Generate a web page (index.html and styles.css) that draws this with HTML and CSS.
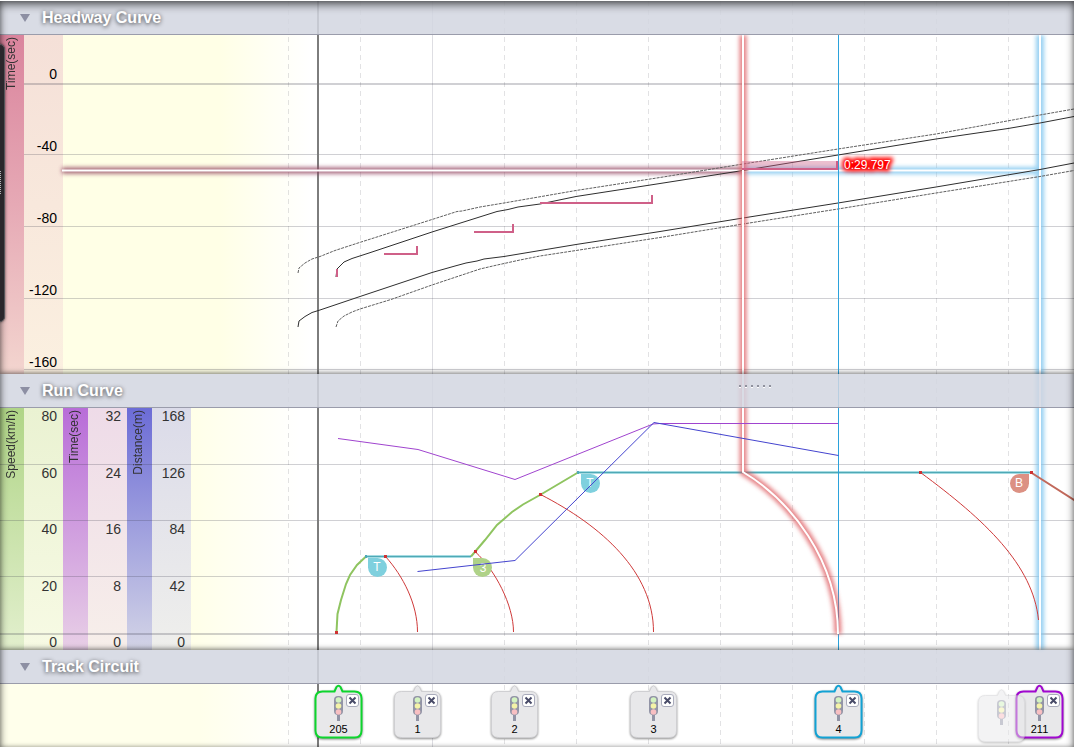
FILE: index.html
```html
<!DOCTYPE html>
<html lang="en">
<head>
  <meta charset="UTF-8" />
  <meta name="viewport" content="width=device-width, initial-scale=1.0"/>
  <title>Headway Curve</title>
  <link rel="stylesheet" href="styles.css">
</head>
<body>
  <main class="board">
    <div class="panels">
      <section class="panel">
        <h2 class="panel-header">
          <button type="button" class="toggle"><span class="arrow"></span>Headway Curve</button>
        </h2>
        <div class="plot headway-plot">
          <div class="axis headway-axis">
            <div class="axis-name"><span>Time(sec)</span></div>
            <ul class="ticks">
              <li>0</li>
              <li>-40</li>
              <li>-80</li>
              <li>-120</li>
              <li>-160</li>
            </ul>
          </div>
        </div>
      </section>

      <section class="panel">
        <h2 class="panel-header">
          <button type="button" class="toggle"><span class="arrow"></span>Run Curve</button>
          <span class="grip"><i></i><i></i><i></i><i></i><i></i><i></i></span>
        </h2>
        <div class="plot run-plot">
          <div class="axis speed-axis">
            <div class="axis-name"><span>Speed(km/h)</span></div>
            <ul class="ticks"><li>80</li><li>60</li><li>40</li><li>20</li><li>0</li></ul>
          </div>
          <div class="axis time-axis">
            <div class="axis-name"><span>Time(sec)</span></div>
            <ul class="ticks"><li>32</li><li>24</li><li>16</li><li>8</li><li>0</li></ul>
          </div>
          <div class="axis distance-axis">
            <div class="axis-name"><span>Distance(m)</span></div>
            <ul class="ticks"><li>168</li><li>126</li><li>84</li><li>42</li><li>0</li></ul>
          </div>
        </div>
      </section>

      <section class="panel">
        <h2 class="panel-header">
          <button type="button" class="toggle"><span class="arrow"></span>Track Circuit</button>
        </h2>
        <div class="plot track-plot">
          <div class="chip start" style="left: 339px">
            <svg class="bubble"><use href="#bubble"/></svg>
            <svg class="signal"><use href="#signal"/></svg>
            <button type="button" class="remove" aria-label="Remove 205"><svg><use href="#cross"/></svg></button>
            <span class="chip-label">205</span>
          </div>
          <div class="chip" style="left: 418px">
            <svg class="bubble"><use href="#bubble"/></svg>
            <svg class="signal"><use href="#signal"/></svg>
            <button type="button" class="remove" aria-label="Remove 1"><svg><use href="#cross"/></svg></button>
            <span class="chip-label">1</span>
          </div>
          <div class="chip" style="left: 515px">
            <svg class="bubble"><use href="#bubble"/></svg>
            <svg class="signal"><use href="#signal"/></svg>
            <button type="button" class="remove" aria-label="Remove 2"><svg><use href="#cross"/></svg></button>
            <span class="chip-label">2</span>
          </div>
          <div class="chip" style="left: 654px">
            <svg class="bubble"><use href="#bubble"/></svg>
            <svg class="signal"><use href="#signal"/></svg>
            <button type="button" class="remove" aria-label="Remove 3"><svg><use href="#cross"/></svg></button>
            <span class="chip-label">3</span>
          </div>
          <div class="chip current" style="left: 839px">
            <svg class="bubble"><use href="#bubble"/></svg>
            <svg class="signal"><use href="#signal"/></svg>
            <button type="button" class="remove" aria-label="Remove 4"><svg><use href="#cross"/></svg></button>
            <span class="chip-label">4</span>
          </div>
          <div class="chip end" style="left: 1040px">
            <svg class="bubble"><use href="#bubble"/></svg>
            <svg class="signal"><use href="#signal"/></svg>
            <button type="button" class="remove" aria-label="Remove 211"><svg><use href="#cross"/></svg></button>
            <span class="chip-label">211</span>
          </div>
          <div class="chip ghost" style="left: 1002px">
            <svg class="bubble"><use href="#bubble"/></svg>
            <svg class="signal"><use href="#signal"/></svg>
          </div>
        </div>
      </section>
    </div>

    <svg class="diagram">
      <defs>
        <filter id="glow" filterUnits="userSpaceOnUse" x="0" y="0" width="1200" height="760">
          <feGaussianBlur stdDeviation="2"/>
        </filter>
        <filter id="label-glow" x="-20%" y="-50%" width="140%" height="200%">
          <feGaussianBlur stdDeviation="2"/>
        </filter>
        <path id="bubble" d="M8.500 7.500H20.500L22.500 3Q24.500 0.500 26.500 3L28.500 7.500H40.500Q47.500 7.500 47.500 14.500V46.500Q47.500 53.500 40.500 53.500H8.500Q1.500 53.500 1.500 46.500V14.500Q1.500 7.500 8.500 7.500Z"/>
        <g id="signal">
          <rect x="3" y="17" width="3" height="8" fill="#9294a6"/>
          <rect x="0" y="0" width="9" height="19" rx="4" fill="#9294a6"/>
          <circle cx="4.500" cy="4" r="2.800" fill="#d3f3c0"/>
          <circle cx="4.500" cy="10" r="2.800" fill="#f4f3a8"/>
          <circle cx="4.500" cy="16" r="2.800" fill="#f8bfc2"/>
        </g>
        <path id="cross" d="M2.500 2.500L8.500 8.500M8.500 2.500L2.500 8.500"/>
      </defs>

      <g class="scene" transform="translate(0 -1)">
        <!-- grid -->
        <path class="grid-dash" d="M288.500 1V747M360.500 1V747M504.500 1V747M576.500 1V747M648.500 1V747M720.500 1V747M792.500 1V747M864.500 1V747M936.500 1V747M1008.500 1V747"/>
        <path class="grid-main" d="M432.500 1V747"/>
        <path class="grid-line" d="M24 154.500H4000M24 226.500H4000M24 298.500H4000M24 369.500H4000M0 464.500H4000M0 520.500H4000M0 576.500H4000"/>
        <path class="grid-zero" d="M24 84H4000M0 634H4000"/>
        <path class="origin" d="M318 1V747"/>

        <!-- headway guide -->
        <path class="glow-mauve" d="M62 170.500H743" filter="url(#glow)"/>
        <path class="glow-sky" d="M745 170.500H1038" filter="url(#glow)"/>
        <path class="core" d="M62 170.500H1038"/>

        <!-- cursor of the following train -->
        <path class="glow-sky wide" d="M1040 35V650" filter="url(#glow)"/>
        <path class="core" d="M1040 35V650"/>

        <!-- headway curves -->
        <path class="bound" d="M298 273L299 268L305 263L312 259L320 256.500L335 250.500L358 243L432 219.500L457 211.500L462 211L480 207L504 203L576 190.500L660 177.500L743 164L838 149L936 134L1040 115L1074 109L1400 55"/>
        <path class="train" d="M336 277L337 269L344 262L352 258.500L369 253L432 232L497 211.500L508 209.500L518 207L540 204L576 196.500L660 183.500L743 170.500L838 155L936 139L1008 128.500L1040 123L1074 116.500L1400 63"/>
        <path class="train" d="M298 327L299 321L305 316.500L312 312.500L320 310L360 296.500L432 272.500L455 266L466 263L477 261L484 259L504 256.500L576 244.500L660 231.500L743 218L838 203L936 187L1040 169.500L1074 163L1400 109"/>
        <path class="bound" d="M336 327L338 321L344 316L352 312L360 309L391 299.500L432 285L480 269L495 265.500L520 260L540 256L576 250.500L660 237.500L743 224L838 209L936 193L1040 176.500L1074 170.500L1400 117"/>
        <path class="step" d="M337 269V277M384 254H417V246M474 232H513V224M540 203H652V195"/>

        <!-- run curves -->
        <path class="hold-edge" d="M366 556.500H471M578 472.500H1031"/>
        <path class="hold" d="M366 556.500H471M578 472.500H1031"/>
        <path class="power" d="M336.500 632L337.500 614L341 600L346 584L350 575L357 565L366 556.500M471 556.500L485 540L497 525L504 519L512 512L523 504.500L540 495L578 472.500"/>
        <path class="brake" d="M1031 472.500L1074 500L1400 705"/>
        <path class="stop" d="M385.500 556.500C403 576 417.500 604 417.500 632"/>
        <path class="stop" d="M475.500 552C495 570 513.500 605 513.500 632"/>
        <path class="stop" d="M540.500 494.500C602 526 653.500 572 653.500 632"/>
        <path class="stop" d="M920.500 472.500C985 520 1033 565 1038.500 620"/>

        <path class="cursor" d="M838.500 35V650"/>
        <path class="glow-red" d="M743 35V472C790 500 838 560 838 634" filter="url(#glow)"/>
        <path class="core" d="M743 35V472C790 500 838 560 838 634"/>
        <path class="step-fill" d="M742 161H838V168H742Z"/>
        <path class="step" d="M742 169H837V161"/>

        <path class="badge-hold" d="M368 558H377.500A9.500 9.500 0 1 1 368 567.500Z"/>
        <path class="badge-hold" d="M581 474H590.500A9.500 9.500 0 1 1 581 483.500Z"/>
        <path class="badge-power" d="M473 558H482.500A9.500 9.500 0 1 1 473 567.500Z"/>
        <path class="badge-brake" d="M1029 474H1019.500A9.500 9.500 0 1 0 1029 483.500Z"/>
        <text class="badge" x="377" y="571">T</text>
        <text class="badge" x="590" y="487">T</text>
        <text class="badge" x="483" y="572">3</text>
        <text class="badge" x="1019" y="487">B</text>

        <path class="time" d="M338 438.500L418 449.500L515 479.500L653 424L660 423.500H838"/>
        <path class="distance" d="M417.500 571.500L515 560.500L654 422.500L838.500 455.500"/>
        <path class="dots" d="M335 632.500H338M384 556.500H387M474 551.500H477M539 494.500H542M919 472.500H922M1030 472.500H1033"/>
        <path class="dots hold-dots" d="M365 556.500H367M577 472.500H579"/>

        <text class="reading reading-glow" x="844" y="169" filter="url(#label-glow)">0:29.797</text>
        <text class="reading" x="844" y="169">0:29.797</text>
      </g>
    </svg>

    <div class="drawer"></div>
  </main>
</body>
</html>
```

FILE: styles.css
```css
* {
  box-sizing: border-box;
}

body {
  margin: 0;
  padding: 1px 0;
  min-height: 100vh;
  display: flex;
  background-color: #ffffff;
  font-family: "Liberation Sans", Arial, sans-serif;
  color: #333333;
}

.board {
  position: relative;
  flex: 1;
  display: grid;
  overflow: hidden;
}

.board::after {
  content: "";
  position: absolute;
  inset: 0;
  z-index: 3;
  box-shadow: inset 0 4px 9px rgba(0, 0, 0, 0.55), inset 0 0 4px rgba(0, 0, 0, 0.3);
  pointer-events: none;
}

.panels,
.diagram {
  grid-area: 1 / 1;
  min-width: 0;
}

.panels {
  display: flex;
  flex-direction: column;
}

.panel:last-child {
  flex: 1;
  display: flex;
  flex-direction: column;
}

.diagram {
  position: relative;
  z-index: 1;
  width: 100%;
  height: 100%;
  pointer-events: none;
}

/* headers */

.panel-header {
  position: relative;
  z-index: 2;
  display: flex;
  align-items: center;
  height: 34px;
  margin: 0;
  padding: 1px 0 0 20px;
  background-color: rgba(210, 214, 224, 0.85);
  border-bottom: 1px solid #9a9cab;
  box-shadow: 0 -1px 5px rgba(0, 0, 0, 0.55);
  clip-path: inset(-8px 0 0 0);
}

.toggle {
  display: flex;
  align-items: center;
  gap: 12px;
  padding: 0;
  border: none;
  background: none;
  color: #ffffff;
  font: bold 16px/20px "Liberation Sans", Arial, sans-serif;
  text-shadow: 0 1px 4px rgba(0, 0, 0, 0.75);
  cursor: pointer;
}

.arrow {
  border: 5px solid transparent;
  border-top: 8px solid #8d8fa3;
  border-bottom: none;
}

.grip {
  position: absolute;
  left: 739px;
  top: 11px;
  display: flex;
  gap: 4px;
}

.grip i {
  width: 2px;
  height: 3px;
  background-color: #8f919d;
  border-bottom: 1px solid #ffffff;
}

/* plots and axes */

.plot {
  position: relative;
  display: flex;
}

.headway-plot {
  height: 339px;
  background: linear-gradient(to right, #ffffe6 220px, #ffffff 310px);
}

.run-plot {
  height: 242px;
  background: linear-gradient(to right, #ffffe8 190px, #ffffff 300px);
}

.track-plot {
  flex: 1;
  min-height: 63px;
  background: linear-gradient(to right, #ffffeb 200px, #ffffff 300px);
}

.axis {
  display: flex;
}

.axis-name {
  width: 25px;
  padding: 2px 0 0 4px;
  font-size: 12px;
  line-height: 14px;
}

.headway-axis .axis-name,
.speed-axis .axis-name {
  width: 24px;
}

.axis-name span {
  display: block;
  writing-mode: vertical-rl;
  transform: rotate(180deg);
}

.ticks {
  display: flex;
  flex-direction: column;
  justify-content: space-between;
  width: 39px;
  margin: 0;
  padding: 0 6px 0 0;
  list-style: none;
  font-size: 14px;
  line-height: 16px;
  text-align: right;
}

.headway-axis .ticks {
  justify-content: flex-end;
  gap: 56px;
  padding-bottom: 4px;
  background: linear-gradient(#f5e0d8, #fbf0e0);
  color: #000000;
}

.headway-axis .axis-name {
  background: linear-gradient(#da849d, #e6a9b5 50%, #f3d5cf);
}

.speed-axis .axis-name {
  background: linear-gradient(#b0d587, #e2efcd);
}

.speed-axis .ticks {
  background: linear-gradient(#eaf2d2, #f7fae4);
}

.time-axis .axis-name {
  background: linear-gradient(#b86dd8, #e8cfe6);
}

.time-axis .ticks {
  background: linear-gradient(#eedbe8, #f7efea);
}

.distance-axis .axis-name {
  background: linear-gradient(#6c6cd6, #d3d4e6);
}

.distance-axis .ticks {
  background: linear-gradient(#dbdbe9, #efefec);
}

/* diagram */

.scene path {
  fill: none;
}

.grid-line,
.grid-zero {
  stroke: rgba(60, 60, 75, 0.24);
}

.grid-dash {
  stroke: rgba(60, 60, 75, 0.15);
  stroke-dasharray: 5 4;
}

.grid-main {
  stroke: rgba(60, 60, 90, 0.17);
}

.grid-zero {
  stroke-width: 2;
}

.origin {
  stroke: #7d7d7d;
  stroke-width: 2;
}

.core {
  stroke: #ffffff;
  stroke-width: 2;
}

.glow-mauve {
  stroke: #91405f;
  stroke-width: 6;
  opacity: 0.85;
}

.glow-sky {
  stroke: #7cc4ee;
  stroke-width: 7;
  opacity: 0.8;
}

.glow-red {
  stroke: #dc5258;
  stroke-width: 7;
  opacity: 0.75;
}

.glow-sky.wide {
  stroke-width: 8;
}

.bound {
  stroke: #606060;
  stroke-dasharray: 3 1;
}

.train {
  stroke: #2e2e2e;
}

.step {
  stroke: #cf6088;
  stroke-width: 2;
}

.scene .step-fill {
  fill: rgba(207, 96, 136, 0.4);
}

.hold-edge {
  stroke: #a5dbe2;
  stroke-width: 3;
}

.hold {
  stroke: #4fa9b6;
}

.power {
  stroke: #8fc460;
  stroke-width: 2;
}

.brake {
  stroke: #c2695b;
  stroke-width: 2;
}

.stop {
  stroke: #cf3a3a;
}

.cursor {
  stroke: #2ba2dc;
}

.time {
  stroke: #a044cf;
}

.distance {
  stroke: #4444cf;
}

.dots {
  stroke: #cf3232;
  stroke-width: 3;
}

.hold-dots {
  stroke: #4fa9b6;
}

.badge {
  font-size: 12px;
  text-anchor: middle;
  fill: #ffffff;
}

.scene .badge-hold {
  fill: #7fd0de;
}

.scene .badge-power {
  fill: #afd288;
}

.scene .badge-brake {
  fill: #dc9183;
}

.reading {
  font-size: 12px;
  fill: #ffffff;
}

.reading-glow {
  fill: #ff0000;
  stroke: #ff0000;
  stroke-width: 5;
}

/* track circuit chips */

.chip {
  position: absolute;
  top: 0;
  z-index: 2;
  width: 49px;
  height: 58px;
  margin-left: -25px;
}

.chip svg {
  display: block;
  overflow: visible;
}

.bubble {
  position: absolute;
  inset: 0;
  width: 49px;
  height: 58px;
  fill: #e8e8ea;
  stroke: #cfcfd2;
  stroke-width: 1;
  filter: drop-shadow(0 1px 1px rgba(0, 0, 0, 0.45));
}

.start .bubble {
  stroke: #0dd52d;
  stroke-width: 2;
}

.current .bubble {
  stroke: #12a2d4;
  stroke-width: 2;
}

.end .bubble {
  stroke: #a007cf;
  stroke-width: 2;
}

.signal {
  position: absolute;
  left: 20px;
  top: 12px;
  width: 9px;
  height: 25px;
}

.remove {
  position: absolute;
  left: 32px;
  top: 10px;
  width: 13px;
  height: 13px;
  padding: 0;
  background-color: #ffffff;
  border: 1px solid #a9abbb;
  border-radius: 3px;
  cursor: pointer;
}

.remove svg {
  width: 11px;
  height: 11px;
  stroke: #484b68;
  stroke-width: 2;
}

.chip-label {
  position: absolute;
  left: 0;
  right: 0;
  top: 39px;
  font-size: 11px;
  line-height: 13px;
  text-align: center;
  color: #000000;
}

.ghost {
  top: 4px;
  opacity: 0.5;
}

/* side drawer handle */

.drawer {
  position: absolute;
  left: -8px;
  top: 43px;
  z-index: 4;
  width: 13px;
  height: 278px;
  background-color: #2a272c;
  border: 1px solid #55555a;
  border-radius: 5px;
  box-shadow: 0 0 3px rgba(0, 0, 0, 0.6);
}

.drawer::after {
  content: "";
  position: absolute;
  left: 7px;
  top: 126px;
  width: 1px;
  height: 24px;
  background: repeating-linear-gradient(#b5b5b8 0 1px, transparent 1px 2px);
}
```
